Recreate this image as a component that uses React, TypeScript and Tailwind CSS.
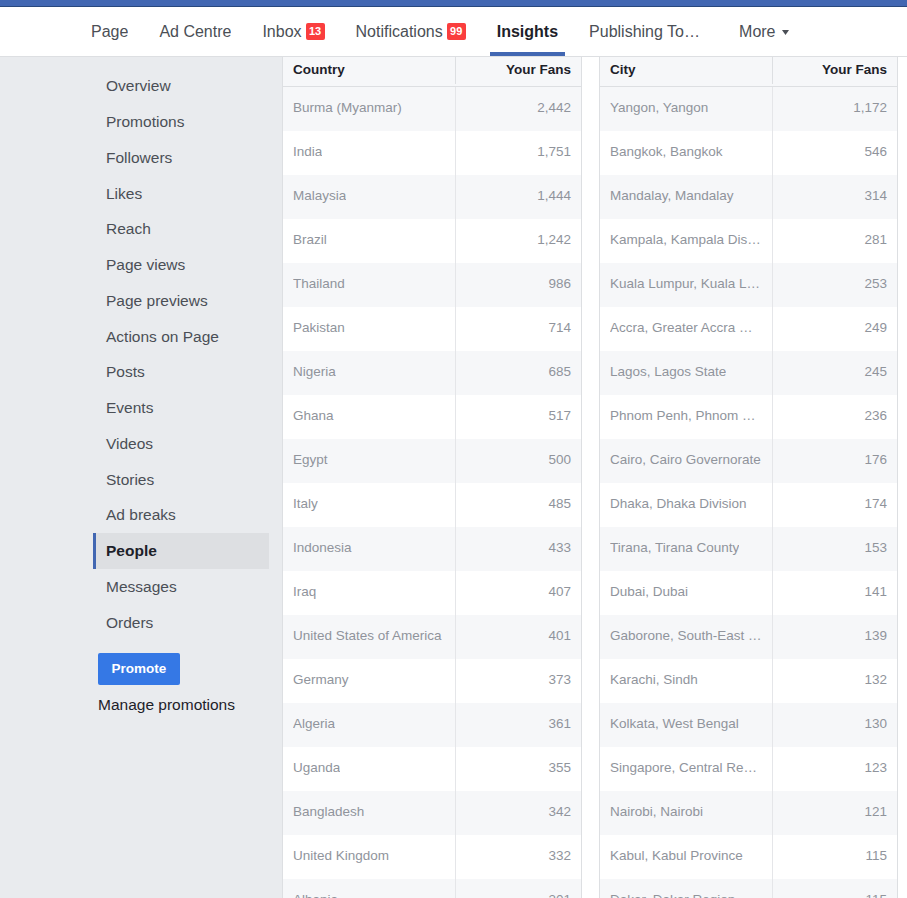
import React from "react";

const countries: [string, string][] = [
  ["Burma (Myanmar)", "2,442"],
  ["India", "1,751"],
  ["Malaysia", "1,444"],
  ["Brazil", "1,242"],
  ["Thailand", "986"],
  ["Pakistan", "714"],
  ["Nigeria", "685"],
  ["Ghana", "517"],
  ["Egypt", "500"],
  ["Italy", "485"],
  ["Indonesia", "433"],
  ["Iraq", "407"],
  ["United States of America", "401"],
  ["Germany", "373"],
  ["Algeria", "361"],
  ["Uganda", "355"],
  ["Bangladesh", "342"],
  ["United Kingdom", "332"],
  ["Albania", "301"],
];

const cities: [string, string][] = [
  ["Yangon, Yangon", "1,172"],
  ["Bangkok, Bangkok", "546"],
  ["Mandalay, Mandalay", "314"],
  ["Kampala, Kampala District", "281"],
  ["Kuala Lumpur, Kuala Lumpur", "253"],
  ["Accra, Greater Accra Region", "249"],
  ["Lagos, Lagos State", "245"],
  ["Phnom Penh, Phnom Penh", "236"],
  ["Cairo, Cairo Governorate", "176"],
  ["Dhaka, Dhaka Division", "174"],
  ["Tirana, Tirana County", "153"],
  ["Dubai, Dubai", "141"],
  ["Gaborone, South-East District", "139"],
  ["Karachi, Sindh", "132"],
  ["Kolkata, West Bengal", "130"],
  ["Singapore, Central Region", "123"],
  ["Nairobi, Nairobi", "121"],
  ["Kabul, Kabul Province", "115"],
  ["Dakar, Dakar Region", "115"],
];

const sideItems = [
  "Overview",
  "Promotions",
  "Followers",
  "Likes",
  "Reach",
  "Page views",
  "Page previews",
  "Actions on Page",
  "Posts",
  "Events",
  "Videos",
  "Stories",
  "Ad breaks",
  "People",
  "Messages",
  "Orders",
];

function Badge({ n }: { n: string }) {
  return (
    <span className="ml-[4px] inline-flex h-[17px] min-w-[19px] items-center justify-center rounded-[2px] bg-[#fa3e3e] px-[3px] text-[11px] font-bold leading-none text-white">
      {n}
    </span>
  );
}

function NavItem({
  label,
  badge,
  active,
  w,
}: {
  label: string;
  badge?: string;
  active?: boolean;
  w?: string;
}) {
  return (
    <div
      className={
        "relative flex h-full items-center px-2 " +
        (w ? w : "")
      }
    >
      <span
        className={
          "truncate text-[16px] " +
          (active ? "font-bold text-[#1d2129]" : "text-[#4b4f56]")
        }
      >
        {label}
      </span>
      {badge && <Badge n={badge} />}
      {active && (
        <div className="absolute bottom-0 left-[1px] right-[1px] h-[4px] bg-[#4267b2]" />
      )}
    </div>
  );
}

function Table({
  title,
  rows,
  leftBorder,
}: {
  title: string;
  rows: [string, string][];
  leftBorder?: boolean;
}) {
  return (
    <div
      className={
        "w-[299px] shrink-0 border-r border-[#dddfe2] " +
        (leftBorder ? "border-l" : "")
      }
    >
      <div className="flex h-[30px] border-b border-[#dddfe2] bg-[#f6f7f9] pb-[2px] text-[13.5px] font-bold text-[#1d2129]">
        <div className="flex w-[173px] shrink-0 items-center border-r border-[#dddfe2] pl-[10px]">
          {title}
        </div>
        <div className="flex flex-1 items-center justify-end pr-[10px]">
          Your Fans
        </div>
      </div>
      {rows.map(([a, b], i) => (
        <div
          key={i}
          className={
            "flex h-[44px] text-[13.5px] text-[#90949c] " +
            (i % 2 === 0 ? "bg-[#f6f7f9]" : "bg-white")
          }
        >
          <div className="flex w-[173px] shrink-0 items-center border-r border-[#e5e6e9] pb-[1px] pl-[10px] pr-[10px]">
            <span className="truncate">{a}</span>
          </div>
          <div className="flex flex-1 items-center justify-end pb-[1px] pr-[10px]">
            {b}
          </div>
        </div>
      ))}
    </div>
  );
}

export default function App() {
  return (
    <div className="flex h-[898px] w-full flex-col overflow-hidden bg-white font-['Liberation_Sans',Arial,sans-serif]">
      <div className="h-[7px] shrink-0 border-b border-[#29487d] bg-[#4267b2]" />
      <div className="flex h-[50px] shrink-0 items-stretch border-b border-[#dddfe2] bg-white pl-[83px]">
        <div className="flex h-[49px] gap-[15px]">
          <NavItem label="Page" />
          <NavItem label="Ad Centre" />
          <NavItem label="Inbox" badge="13" />
          <NavItem label="Notifications" badge="99" />
          <NavItem label="Insights" active />
          <NavItem label="Publishing To…" w="w-[135px]" />
          <div className="flex h-full items-center px-2">
            <span className="text-[16px] text-[#4b4f56]">More</span>
            <svg
              width="7"
              height="5"
              viewBox="0 0 7 5"
              className="ml-[6px] mt-[1px]"
            >
              <path d="M0 0 L7 0 L3.5 5 Z" fill="#4b4f56" />
            </svg>
          </div>
        </div>
      </div>
      <div className="flex flex-1">
        <div className="w-[283px] shrink-0 border-r border-[#dddfe2] bg-[#e9ebee] pt-[11px]">
          <div className="ml-[93px] w-[176px]">
            {sideItems.map((s) => {
              const active = s === "People";
              return (
                <div
                  key={s}
                  className={
                    "flex h-[35.75px] items-center border-l-[3px] pl-[10px] text-[15.5px] " +
                    (active
                      ? "border-[#4267b2] bg-[#dddfe2] font-bold text-[#1d2129]"
                      : "border-transparent text-[#4b4f56]")
                  }
                >
                  {s}
                </div>
              );
            })}
          </div>
          <div className="ml-[98px] mt-[13px] flex h-[32px] w-[82px] items-center justify-center rounded-[2px] bg-[#3578e5] text-[13.5px] font-bold text-white">
            Promote
          </div>
          <div className="ml-[98px] mt-[8px] text-[15.5px] text-[#1d2129]">
            Manage promotions
          </div>
        </div>
        <div className="flex gap-[17px]">
          <Table title="Country" rows={countries} />
          <Table title="City" rows={cities} leftBorder />
        </div>
      </div>
    </div>
  );
}
